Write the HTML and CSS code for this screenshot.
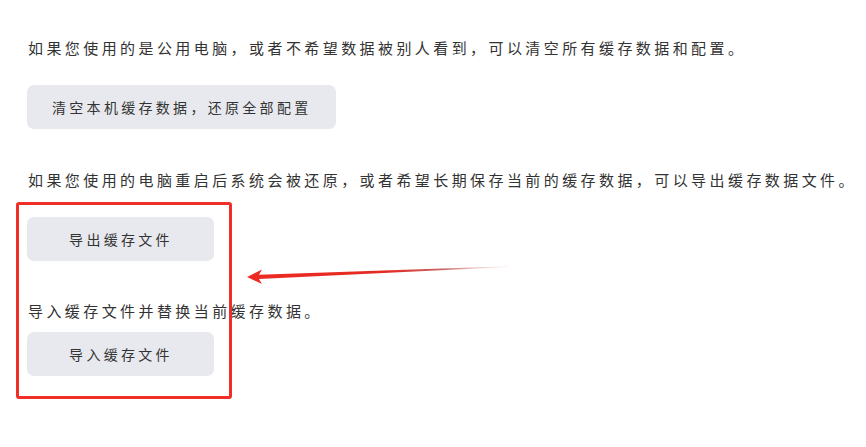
FILE: index.html
```html
<!DOCTYPE html>
<html lang="zh-CN">
<head>
    <meta charset="utf-8" />
    <meta name="viewport" content="width=device-width, initial-scale=1" />
    <title>缓存数据</title>
    <link rel="stylesheet" href="styles.css">
</head>
<body>
    <div class="page">
        <div class="section">
            <p class="desc">如果您使用的是公用电脑，或者不希望数据被别人看到，可以清空所有缓存数据和配置。</p>
            <button class="btn">清空本机缓存数据，还原全部配置</button>
        </div>

        <div class="section">
            <p class="desc">如果您使用的电脑重启后系统会被还原，或者希望长期保存当前的缓存数据，可以导出缓存数据文件。</p>
            <div class="actions">
                <button class="btn">导出缓存文件</button>
                <p class="desc desc-sub">导入缓存文件并替换当前缓存数据。</p>
                <button class="btn">导入缓存文件</button>

                <!-- annotation: highlight box + arrow -->
                <div class="highlight"></div>
                <svg class="arrow" width="275" height="30" viewBox="0 0 275 30">
                    <defs>
                        <linearGradient id="arrowFade" gradientUnits="userSpaceOnUse" x1="0" y1="0" x2="270" y2="0">
                            <stop offset="0" stop-color="#ee2b24" />
                            <stop offset="0.55" stop-color="#e52a24" />
                            <stop offset="0.75" stop-color="#b8403a" stop-opacity="0.8" />
                            <stop offset="1" stop-color="#f3c8c4" stop-opacity="0.2" />
                        </linearGradient>
                    </defs>
                    <polygon points="7,19 22,11.5 19,16.8 268,8.3 268,8.9 19,21 22,26" fill="url(#arrowFade)" />
                </svg>
            </div>
        </div>
    </div>
</body>
</html>
```

FILE: styles.css
```css
* {
    margin: 0;
    padding: 0;
    box-sizing: border-box;
}

body {
    font-family: "Noto Sans CJK SC", "Noto Sans", sans-serif;
    background: #fff;
    color: #333;
}

.page {
    padding: 36px 27px 0;
}

.section {
    margin-bottom: 39px;
}

.desc {
    font-size: 15px;
    line-height: 24px;
    letter-spacing: 3.42px;
    margin-bottom: 25px;
    padding-left: 1px;
    white-space: nowrap;
}

.desc-sub {
    margin-top: 38px;
    margin-bottom: 9px;
}

.btn {
    display: flex;
    align-items: center;
    justify-content: center;
    height: 44px;
    min-width: 187px;
    padding: 0 24px 0 25px;
    border: none;
    border-radius: 7px;
    background: #e8e9ee;
    color: #333;
    font-family: inherit;
    font-size: 14px;
    letter-spacing: 3.3px;
    cursor: pointer;
}

.actions {
    position: relative;
}

.highlight {
    position: absolute;
    left: -11px;
    top: -15px;
    width: 216px;
    height: 197px;
    border: 3px solid #ef2f28;
    border-radius: 3px;
    pointer-events: none;
}

.arrow {
    position: absolute;
    left: 213px;
    top: 41px;
    pointer-events: none;
}
```
